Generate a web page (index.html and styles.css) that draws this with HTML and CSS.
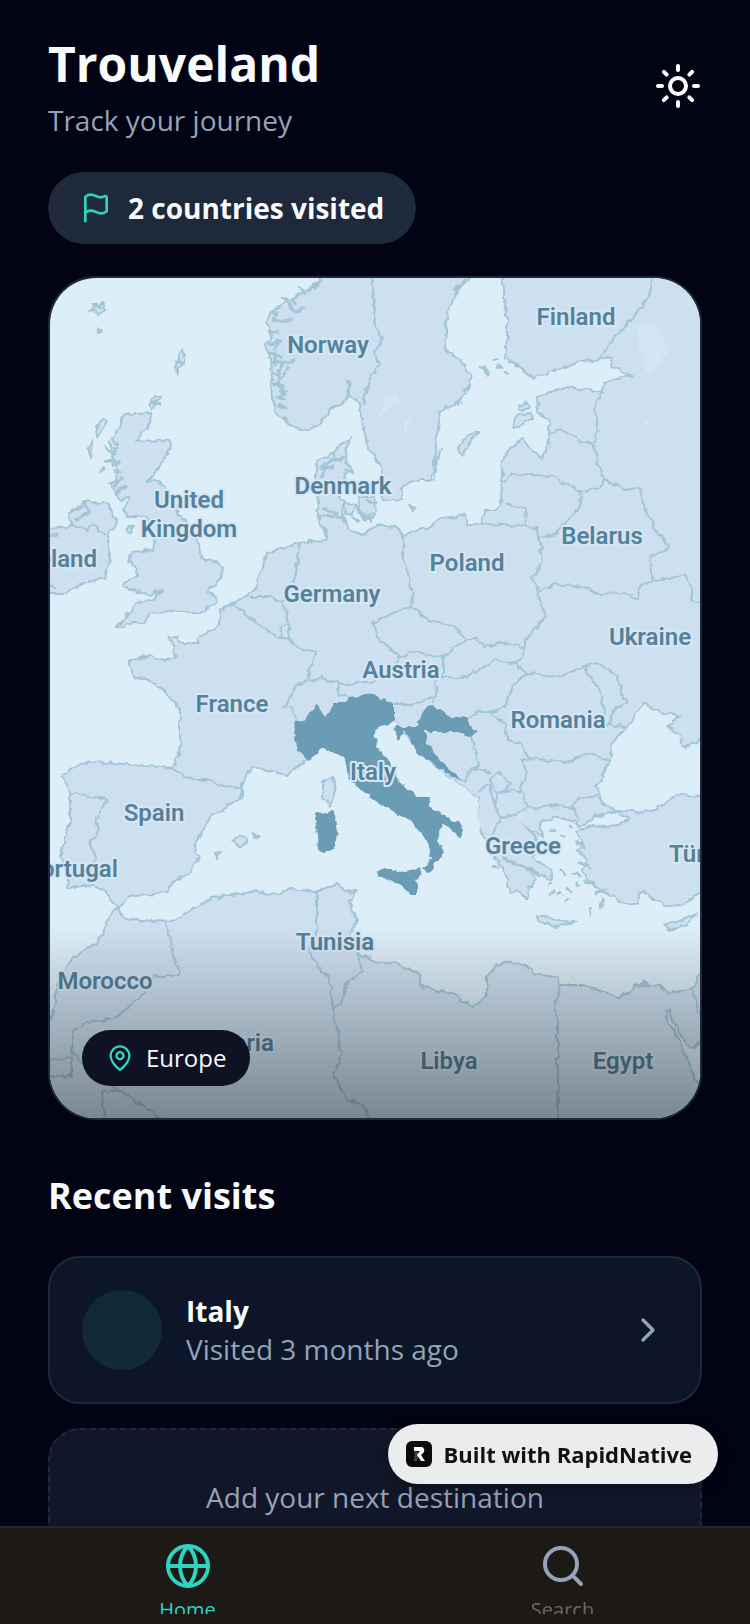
FILE: index.html
```html
<!DOCTYPE html>
<html lang="en">

<head>
    <meta charset="UTF-8">
    <meta name="viewport" content="width=device-width, initial-scale=1.0">
    <title>Trouveland</title>
    <link rel="stylesheet" href="styles.css">
</head>

<body>
    <main class="content">
        <header class="header">
            <div>
                <h1>Trouveland</h1>
                <p class="subtitle">Track your journey</p>
            </div>
            <button type="button" class="theme-button" aria-label="Toggle theme">
                <svg class="icon" viewBox="0 0 24 24">
                    <circle cx="12" cy="12" r="4" />
                    <path d="M12 2v2M12 20v2M4.93 4.93l1.41 1.41M17.66 17.66l1.41 1.41M2 12h2M20 12h2M6.34 17.66l-1.41 1.41M19.07 4.93l-1.41 1.41" />
                </svg>
            </button>
        </header>

        <div class="stat">
            <svg class="icon" viewBox="0 0 24 24">
                <path d="M4 22V4a1 1 0 0 1 .4-.8A6 6 0 0 1 8 2c3 0 5 2 7.333 2q2 0 3.067-.8A1 1 0 0 1 20 4v10a1 1 0 0 1-.4.8A6 6 0 0 1 16 16c-3 0-5-2-8-2a6 6 0 0 0-4 1.528" />
            </svg>
            <span>2 countries visited</span>
        </div>

        <section class="map-card">
            <svg class="map" viewBox="50 278 650 840" preserveAspectRatio="xMidYMid slice">
                <defs>
                    <!-- roughens the coastlines -->
                    <filter id="coast" filterUnits="userSpaceOnUse" x="40" y="268" width="670" height="860">
                        <feTurbulence type="fractalNoise" baseFrequency="0.12" numOctaves="2" seed="4" />
                        <feDisplacementMap in="SourceGraphic" scale="7" xChannelSelector="R" yChannelSelector="G" />
                    </filter>
                    <linearGradient id="shade" x1="0" y1="0" x2="0" y2="1">
                        <stop offset="0" stop-color="#000" stop-opacity="0" />
                        <stop offset="1" stop-color="#000" stop-opacity="0.4" />
                    </linearGradient>
                </defs>

                <g filter="url(#coast)">
                    <g class="land">
                        <!-- Great Britain and Ireland -->
                        <path d="M153 413L148 427L139 434L137 441L170 440L172 446L157 470L147 482L155 480L167 488L177 510L187 527L198 543L202 560L210 560L222 567L220 580L207 592L217 598L215 603L200 612L177 612L150 613L145 623L133 622L122 628L115 627L128 615L137 602L152 600L162 590L150 595L122 587L125 582L138 578L138 567L128 563L133 552L153 550L155 537L147 517L127 517L123 510L130 497L120 500L112 488L118 470L112 457L117 447L113 437L120 427L123 415Z" />
                        <path d="M30 530L50 530L73 525L70 515L83 502L108 503L117 523L107 535L110 553L107 570L105 578L83 583L67 593L52 593L30 590Z" />
                        <!-- Norway and Sweden -->
                        <path d="M320 260L320 282L297 295L285 304L270 312L267 323L272 335L265 345L270 360L272 398L277 413L293 427L303 430L317 427L333 407L345 402L350 393L360 405L363 427L368 447L383 470L380 480L383 500L403 500L403 487L413 480L430 480L433 470L437 437L440 413L453 405L467 393L472 378L460 360L447 353L445 330L450 303L460 287L470 278L470 260Z" />
                        <!-- mainland -->
                        <path d="M507 260L503 283L507 313L507 337L505 358L520 367L533 378L557 370L577 363L597 360L610 357L613 367L633 376L617 378L603 383L602 392L567 387L547 393L537 398L538 413L550 423L548 450L540 458L533 452L523 438L510 447L502 463L502 483L501 500L495 511L485 511L480 523L467 525L465 515L443 518L427 528L403 535L397 528L387 525L377 525L363 535L350 530L342 517L343 503L338 492L347 470L353 473L345 457L350 438L333 452L317 462L315 477L318 503L318 517L325 533L327 540L300 543L267 553L263 567L253 592L233 603L220 610L220 625L198 638L198 643L180 643L178 636L170 636L175 658L157 660L150 655L128 662L133 675L152 682L167 693L180 710L180 747L173 768L110 763L85 762L63 775L70 793L70 820L60 857L70 868L67 888L93 885L105 890L118 907L133 895L167 893L173 882L187 875L200 857L193 847L210 817L242 798L242 782L253 767L287 775L307 760L330 740L393 722L410 740L430 763L453 780L478 798L478 827L487 840L497 858L503 870L510 892L517 890L527 900L530 887L537 880L527 870L553 880L550 870L533 857L537 837L523 825L543 837L540 823L557 817L575 822L580 828L593 818L617 811L603 803L597 787L610 760L613 742L627 727L643 703L660 712L680 715L667 727L680 737L683 747L700 740L720 740L720 260Z" />
                        <!-- Turkey -->
                        <path d="M617 810L650 812L678 795L720 797L720 885L700 893L683 905L667 906L640 892L637 903L623 903L607 892L593 887L583 870L588 860L577 850L583 843L577 833L593 825L613 827L628 820Z" />
                        <!-- North Africa -->
                        <path d="M112 910L118 908L123 918L153 921L173 922L190 910L213 898L257 891L273 895L290 889L317 892L337 883L345 892L357 890L348 903L358 920L350 933L357 953L377 963L393 962L417 972L423 987L450 993L473 1006L487 995L487 977L495 967L510 961L530 967L533 973L557 978L560 985L583 985L618 997L637 987L657 985L670 993L693 988L700 973L720 960L720 1140L30 1140L30 1020L50 1020L55 1003L57 983L73 957L97 943L104 930Z" />
                        <!-- islands -->
                        <path d="M333 777L335 790L330 807L322 797L322 783Z M537 915L558 920L577 921L558 926L540 922Z M663 925L675 922L697 914L686 925L670 931Z M470 435L478 432L470 443L462 456L458 449L462 440Z M513 422L517 415L531 414L533 418L515 429Z M519 405L527 402L529 408L521 410Z M233 841L241 836L247 840L241 847Z M252 834L259 835L256 838Z M215 853L220 852L217 858Z M359 497L374 495L376 510L366 517L360 510Z M343 502L354 504L353 516L345 513Z M409 506L416 508L414 511Z M94 430L104 418L107 422L98 437Z M88 448L93 441L91 458Z M91 310L102 303L105 309L98 315Z M97 328L101 332L98 333Z M175 365L182 350L185 355L178 374Z M150 406L155 395L160 396L153 410Z M127 530L134 525L131 533Z M436 460L441 450L434 478Z M591 908L590 916Z M600 904L604 898L600 908Z" />
                    </g>

                    <g class="borders">
                        <path d="M73 525L80 527L87 532L93 525L105 535" />
                        <path d="M372 270L374 303L375 327L383 338L375 350L378 367L370 378L367 387L363 405" />
                        <path d="M650 270L652 288L640 310L610 343L597 362" />
                        <path d="M70 795L80 793L93 797L107 800L98 817L97 837L90 840L95 857L92 868L93 885" />
                        <path d="M173 768L190 780L207 780L223 787L242 788" />
                        <path d="M233 603L250 618L263 628L280 638L290 640L297 647L315 652L307 680L297 685L283 708L293 707L297 720" />
                        <path d="M250 597L270 597L283 603L288 623L282 627L280 638M288 623L290 640M300 543L297 567L295 580L283 603" />
                        <path d="M307 680L322 678L337 683L350 685L357 682L373 682L383 672L400 658M337 683L340 695L348 697" />
                        <path d="M318 515L342 517" />
                        <path d="M403 535L403 560L410 580L413 607L400 610L373 623L380 640L400 658L412 652L443 657L465 640L455 628L440 622L428 620L413 607" />
                        <path d="M465 640L475 638L485 647L500 642L525 648L517 664L495 661L465 677L443 677L443 657" />
                        <path d="M481 524L527 526L537 530L543 560L533 577L538 592L545 617L525 640L525 650" />
                        <path d="M503 503L525 508L526 525M537 537L557 533L570 517L582 503L580 492" />
                        <path d="M502 482L513 474L553 476L580 492L600 487L603 480L597 460L593 443L583 443L562 430L549 433M593 443L598 430L593 410L602 392" />
                        <path d="M603 480L620 485L625 490L640 488L643 503L648 515L655 530L670 548L650 557L653 580" />
                        <path d="M538 592L555 584L577 586L600 594L625 593L637 600L640 587L653 580L670 578L685 575L692 590L692 600L720 605" />
                        <path d="M517 664L527 673L515 685L503 708L490 712L478 712L470 718M443 677L437 680L435 695L433 703M393 705L410 705L433 697" />
                        <path d="M527 673L545 675L557 678L583 667L597 662L618 677L620 688L628 705L617 706L607 725L627 727M583 667L600 690L604 710L603 725" />
                        <path d="M490 712L505 725L508 740L522 745L528 758L567 762L585 753L610 760" />
                        <path d="M528 758L522 760L527 773L520 787L527 808L557 806L573 808L580 797L597 795L603 803M575 808L577 822" />
                        <path d="M527 808L515 815L500 817L493 805L498 793L520 790M490 780L498 772L510 783L507 790L497 793L490 780" />
                        <path d="M472 737L475 750L478 762L475 768L490 775M465 783L468 773L475 768M478 792L490 785L494 805L500 817L497 827L490 840" />
                        <path d="M165 923L172 943L175 963L180 970L178 976L155 976L143 995L115 1018L87 1022L72 1032L72 1076L40 1076M72 1050L82 1063L120 1090L165 1122M40 1063L70 1057M105 1122L102 1093L120 1090" />
                        <path d="M317 892L317 925L315 940L308 953L318 967L328 977L333 1007L340 1043L340 1060L333 1073L347 1100L362 1103L372 1125M357 953L363 970L345 985L345 997L334 1010" />
                        <path d="M560 985L555 1007L558 1025L558 1125M693 988L697 1010L710 1030M694 1046L710 1036" />
                    </g>

                    <!-- fjords, inlets and small islands -->
                    <g class="inlets">
                        <path d="M317 282L308 292M322 280L314 290M320 286L312 284M300 294L292 298L296 304M288 302L294 312L304 308M272 318L284 321L294 319M268 330L278 332M268 343L280 342L274 350M268 352L282 358M270 364L284 362L296 360M272 372L282 378L290 366M273 384L284 386L280 394M275 396L286 400M278 406L286 408M350 380L347 390L352 396M278 368L280 390M285 360L278 372M272 310L276 316M300 287L306 294M282 296L292 306M276 352L274 366M284 376L276 384M286 390L278 398" />
                        <path d="M108 450L116 454M104 462L118 462M112 470L122 474M108 485L124 478M114 494L126 486M121 477L115 488M104 445L108 450M98 471L103 468M72 512L84 506M76 520L88 512L84 503M50 536L58 534M50 584L58 588M110 440L114 450M112 466L120 460M92 306L102 308M176 362L184 362M150 402L160 404" />
                        <path d="M320 468L330 460L344 458M334 452L336 462M322 478L324 468L334 466M322 508L338 514M356 505L366 520L376 514M366 500L378 505M362 512L372 522M352 518L360 522" />
                        <path d="M480 366L490 372M484 370L488 374M498 366L502 368M508 362L518 366M522 370L532 376M460 285L454 292M462 400L456 404M470 385L462 392M494 362L498 360M504 372L508 374" />
                        <path d="M550 830L556 832M560 835L564 836M570 825L574 828M576 842L586 848M560 870L566 876M574 872L580 878M548 885L553 882M556 895L562 893M566 888L572 892M576 884L580 888M565 901L570 900M550 894L554 891M576 862L590 866M584 880L594 884M594 894L606 890M497 850L494 858M493 866L499 868M503 858L526 868L540 872" />
                        <path d="M633 987L642 984L652 985M656 986L664 991M672 992L680 991" />
                    </g>

                    <g class="sea">
                        <path d="M307 766L323 748L343 757L352 782L373 800L425 837L432 865L460 850L480 850L478 798L453 780L430 763L410 740L393 722L375 725L330 735Z" />
                        <path class="red-sea" d="M665 1012L669 1012L680 1035L692 1048L710 1040L710 1096L700 1084L693 1073L683 1050Z" />
                    </g>
                    <!-- visited countries -->
                    <g class="visited">
                        <path d="M295 722L303 720L317 705L325 717L333 703L345 703L348 697L373 693L393 705L393 722L375 730L377 747L390 760L400 783L417 797L430 797L427 807L458 822L463 830L460 837L442 825L437 840L445 853L437 862L430 872L423 870L432 857L425 837L413 823L387 808L373 800L350 780L343 757L323 748L307 760L297 750L293 733Z" />
                        <path d="M433 705L450 717L470 718L470 727L477 732L472 737L457 732L425 732L427 743L447 767L465 783L447 773L417 753L410 737L404 731L398 741L393 727L417 727L423 710Z" />
                        <path d="M377 872L387 868L400 872L422 867L417 880L417 893L410 893L397 883L378 877Z" />
                        <path d="M315 815L333 810L338 823L335 848L323 855L318 848Z" />
                    </g>
                    <path class="lakes" d="M635 325L655 325L670 350L650 376L640 350ZM385 395L398 393L398 402L378 418ZM404 425L413 410L404 438ZM644 422L652 422L648 427Z" />
                </g>

                <g class="labels">
                    <text x="328" y="353">Norway</text>
                    <text x="576" y="325">Finland</text>
                    <text x="189" y="508">United</text>
                    <text x="189" y="537">Kingdom</text>
                    <text x="97" y="567" class="end">Ireland</text>
                    <text x="343" y="494">Denmark</text>
                    <text x="602" y="544">Belarus</text>
                    <text x="467" y="571">Poland</text>
                    <text x="332" y="602">Germany</text>
                    <text x="650" y="645">Ukraine</text>
                    <text x="401" y="678">Austria</text>
                    <text x="232" y="712">France</text>
                    <text x="558" y="728">Romania</text>
                    <text x="373" y="780">Italy</text>
                    <text x="154" y="821">Spain</text>
                    <text x="118" y="877" class="end">Portugal</text>
                    <text x="523" y="854">Greece</text>
                    <text x="669" y="862" class="start">Türkiye</text>
                    <text x="335" y="950">Tunisia</text>
                    <text x="105" y="989">Morocco</text>
                    <text x="274" y="1051" class="end">Algeria</text>
                    <text x="449" y="1069">Libya</text>
                    <text x="623" y="1069">Egypt</text>
                </g>
                <rect x="50" y="926" width="650" height="192" fill="url(#shade)" />
            </svg>
            <div class="region">
                <svg class="icon" viewBox="0 0 24 24">
                    <path d="M20 10c0 4.993-5.539 10.193-7.399 11.799a1 1 0 0 1-1.202 0C9.539 20.193 4 14.993 4 10a8 8 0 0 1 16 0" />
                    <circle cx="12" cy="10" r="3" />
                </svg>
                <span>Europe</span>
            </div>
        </section>

        <h2>Recent visits</h2>
        <a href="#" class="visit">
            <span class="visit-flag"></span>
            <span class="visit-text">
                <strong>Italy</strong>
                <span>Visited 3 months ago</span>
            </span>
            <svg class="icon" viewBox="0 0 24 24">
                <path d="m9 18 6-6-6-6" />
            </svg>
        </a>
        <button type="button" class="add">Add your next destination</button>
    </main>

    <a href="#" class="badge">
        <svg viewBox="0 0 26 26">
            <rect width="26" height="26" rx="6" fill="#0b0b0c" />
            <path d="M9 10L13 12L11 20H8Z" fill="#444" />
            <path d="M8 6H16Q19 7 18 11L15 14L19 20H15L11 14L14 10H8Z" fill="#fff" />
        </svg>
        <span>Built with RapidNative</span>
    </a>

    <nav class="tabs">
        <a href="#" class="tab active">
            <svg class="icon" viewBox="0 0 24 24">
                <circle cx="12" cy="12" r="10" />
                <path d="M12 2a14.5 14.5 0 0 0 0 20 14.5 14.5 0 0 0 0-20M2 12h20" />
            </svg>
            <span>Home</span>
        </a>
        <a href="#" class="tab">
            <svg class="icon" viewBox="0 0 24 24">
                <circle cx="11" cy="11" r="8" />
                <path d="m21 21-4.3-4.3" />
            </svg>
            <span>Search</span>
        </a>
    </nav>
</body>

</html>
```
FILE: styles.css
```css
* {
    box-sizing: border-box;
}

body {
    font-family: "Open Sans", "Noto Sans", sans-serif;
    font-size: 28px;
    line-height: 38px;
    background-color: #020414;
    color: #f8fafc;
    margin: 0;
    height: 100vh;
    display: flex;
    flex-direction: column;
    overflow: hidden;
}

h1,
h2,
p {
    margin: 0;
}

a {
    color: inherit;
    text-decoration: none;
}

button {
    font: inherit;
    background: none;
    border: none;
    padding: 0;
    cursor: pointer;
}

.icon {
    display: block;
    flex-shrink: 0;
    width: 48px;
    height: 48px;
    fill: none;
    stroke: currentColor;
    stroke-width: 2;
    stroke-linecap: round;
    stroke-linejoin: round;
}

.content {
    flex: 1;
    min-height: 0;
    overflow-y: auto;
    scrollbar-width: none;
    padding: 32px 48px;
}

.header {
    display: flex;
    align-items: center;
    justify-content: space-between;
}

h1 {
    font-size: 48px;
    line-height: 64px;
}

h2 {
    font-size: 36px;
    line-height: 56px;
    margin: 48px 0 32px;
}

.subtitle {
    margin-top: 4px;
    line-height: 40px;
    color: #94a3b8;
}

.theme-button {
    color: #fff;
}

.stat {
    display: flex;
    align-items: center;
    gap: 16px;
    width: fit-content;
    height: 72px;
    margin: 32px 0;
    padding: 0 32px;
    border-radius: 36px;
    background-color: #1e293b;
    font-weight: 700;
}

.stat .icon {
    width: 32px;
    height: 32px;
    color: #2dd4bf;
}

/* Map */
.map-card {
    position: relative;
    border: 2px solid #1e293b;
    border-radius: 48px;
    overflow: hidden;
}

.map {
    display: block;
    width: 100%;
    background-color: #dceef7;
}

.land path {
    fill: #cde0f0;
    stroke: #a3c6d6;
    stroke-width: 2;
    stroke-linejoin: round;
}

.borders path,
.inlets path {
    fill: none;
    stroke: #a3c6d6;
    stroke-width: 2;
    stroke-linejoin: round;
}

.inlets path {
    stroke-width: 3;
}

.sea path {
    fill: #dceef7;
}

.sea .red-sea {
    stroke: #a3c6d6;
    stroke-width: 2;
}

.visited path {
    fill: #6b9db5;
}

.lakes {
    fill: #d3e6f3;
}

.labels text {
    font-family: Roboto, sans-serif;
    font-size: 24px;
    font-weight: 600;
    text-anchor: middle;
    fill: #54819b;
    stroke: #d6e7f4;
    stroke-width: 4px;
    stroke-linejoin: round;
    paint-order: stroke;
}

.labels .start {
    text-anchor: start;
}

.labels .end {
    text-anchor: end;
}

.region {
    position: absolute;
    left: 32px;
    bottom: 32px;
    display: flex;
    align-items: center;
    gap: 12px;
    height: 56px;
    padding: 0 24px;
    border-radius: 28px;
    background-color: #0f1222;
    font-size: 24px;
}

.region .icon {
    width: 28px;
    height: 28px;
    color: #2dd4bf;
}

/* Visits */
.visit {
    display: flex;
    align-items: center;
    gap: 24px;
    padding: 32px;
    border: 2px solid #1e293b;
    border-radius: 32px;
    background-color: #0d1628;
    color: #94a3b8;
}

.visit-flag {
    width: 80px;
    height: 80px;
    border-radius: 50%;
    background-color: #122a37;
}

.visit-text {
    flex: 1;
    display: flex;
    flex-direction: column;
}

.visit-text strong {
    color: #f8fafc;
}

.visit .icon {
    width: 40px;
    height: 40px;
}

.add {
    width: 100%;
    margin-top: 24px;
    padding: 48px;
    border: 2px dashed #1e293b;
    border-radius: 32px;
    background-color: #111729;
    color: #94a3b8;
}

.badge {
    position: fixed;
    right: 32px;
    bottom: 140px;
    display: flex;
    align-items: center;
    gap: 11px;
    height: 60px;
    padding: 0 26px 0 18px;
    border-radius: 30px;
    background-color: #ebecee;
    box-shadow: 0 4px 16px rgba(0, 0, 0, 0.3);
    color: #111;
    font-size: 22px;
    font-weight: 700;
}

.badge svg {
    width: 26px;
    height: 26px;
}

/* Bottom tabs */
.tabs {
    display: flex;
    height: 98px;
    padding: 14px 0 10px;
    border-top: 2px solid #25262b;
    background-color: #1c1917;
    color: #94a3b8;
}

.tab {
    flex: 1;
    display: flex;
    flex-direction: column;
    align-items: center;
    gap: 4px;
    overflow: hidden;
}

.tab span {
    font-size: 20px;
    line-height: 32px;
    color: #6b6661;
}

.active,
.active span {
    color: #2dd4bf;
}
```
